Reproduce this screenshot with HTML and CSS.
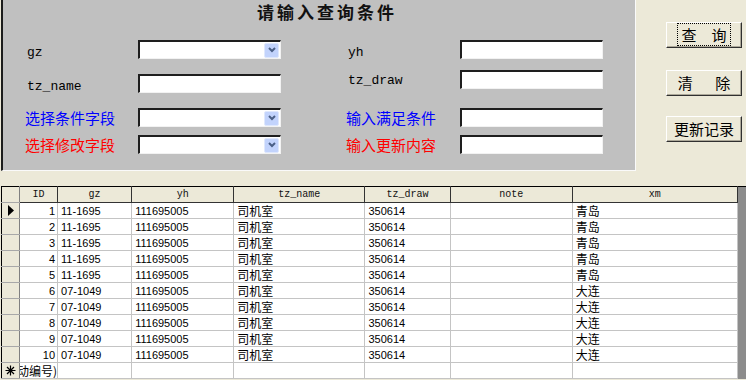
FILE: index.html
```html
<!DOCTYPE html>
<html lang="zh-CN">
<head>
    <meta charset="UTF-8">
    <title>查询</title>
    <link rel="stylesheet" href="styles.css">
</head>
<body>
    <div class="top">
        <div class="panel">
            <h2 class="title">请输入查询条件</h2>
            <div class="form">
                <span class="lbl-mono lbl-gz">gz</span>
                <div class="field combo"><span class="arrow"><svg width="8" height="6" viewBox="0 0 8 6"><path d="M1 1 L4 4 L7 1" fill="none" stroke="#4a5f86" stroke-width="2"/></svg></span></div>
                <span class="lbl-mono lbl-yh">yh</span>
                <input class="field" type="text">

                <span class="lbl-mono lbl-name">tz_name</span>
                <input class="field field-name" type="text">
                <span class="lbl-mono lbl-draw">tz_draw</span>
                <input class="field" type="text">

                <span class="lbl-cn blue">选择条件字段</span>
                <div class="field combo"><span class="arrow"><svg width="8" height="6" viewBox="0 0 8 6"><path d="M1 1 L4 4 L7 1" fill="none" stroke="#4a5f86" stroke-width="2"/></svg></span></div>
                <span class="lbl-cn blue">输入满足条件</span>
                <input class="field" type="text">

                <span class="lbl-cn red">选择修改字段</span>
                <div class="field combo"><span class="arrow"><svg width="8" height="6" viewBox="0 0 8 6"><path d="M1 1 L4 4 L7 1" fill="none" stroke="#4a5f86" stroke-width="2"/></svg></span></div>
                <span class="lbl-cn red">输入更新内容</span>
                <input class="field" type="text">
            </div>
        </div>
        <div class="actions">
            <button class="btn"><span class="focus">查&ensp;&ensp;询</span></button>
            <button class="btn">清&ensp;&ensp;&ensp;除</button>
            <button class="btn btn-update">更新记录</button>
        </div>
    </div>

    <div class="grid">
        <table class="data">
            <colgroup>
                <col style="width:18px">
                <col style="width:38px">
                <col style="width:74px">
                <col style="width:102px">
                <col style="width:131px">
                <col style="width:85px">
                <col style="width:122px">
                <col style="width:165px">
            </colgroup>
            <thead>
                <tr>
                    <th class="sel"></th>
                    <th>ID</th>
                    <th>gz</th>
                    <th>yh</th>
                    <th>tz_name</th>
                    <th>tz_draw</th>
                    <th>note</th>
                    <th>xm</th>
                </tr>
            </thead>
            <tbody>
                <tr>
                    <td class="sel"><svg width="8" height="11" viewBox="0 0 8 11"><polygon points="1,0 7,5.5 1,11" fill="#000"/></svg></td>
                    <td class="num">1</td><td>11-1695</td><td>111695005</td><td class="cn">司机室</td><td>350614</td><td></td><td class="cn">青岛</td>
                </tr>
                <tr><td class="sel"></td><td class="num">2</td><td>11-1695</td><td>111695005</td><td class="cn">司机室</td><td>350614</td><td></td><td class="cn">青岛</td></tr>
                <tr><td class="sel"></td><td class="num">3</td><td>11-1695</td><td>111695005</td><td class="cn">司机室</td><td>350614</td><td></td><td class="cn">青岛</td></tr>
                <tr><td class="sel"></td><td class="num">4</td><td>11-1695</td><td>111695005</td><td class="cn">司机室</td><td>350614</td><td></td><td class="cn">青岛</td></tr>
                <tr><td class="sel"></td><td class="num">5</td><td>11-1695</td><td>111695005</td><td class="cn">司机室</td><td>350614</td><td></td><td class="cn">青岛</td></tr>
                <tr><td class="sel"></td><td class="num">6</td><td>07-1049</td><td>111695005</td><td class="cn">司机室</td><td>350614</td><td></td><td class="cn">大连</td></tr>
                <tr><td class="sel"></td><td class="num">7</td><td>07-1049</td><td>111695005</td><td class="cn">司机室</td><td>350614</td><td></td><td class="cn">大连</td></tr>
                <tr><td class="sel"></td><td class="num">8</td><td>07-1049</td><td>111695005</td><td class="cn">司机室</td><td>350614</td><td></td><td class="cn">大连</td></tr>
                <tr><td class="sel"></td><td class="num">9</td><td>07-1049</td><td>111695005</td><td class="cn">司机室</td><td>350614</td><td></td><td class="cn">大连</td></tr>
                <tr><td class="sel"></td><td class="num">10</td><td>07-1049</td><td>111695005</td><td class="cn">司机室</td><td>350614</td><td></td><td class="cn">大连</td></tr>
                <tr>
                    <td class="sel"><svg width="11" height="11" viewBox="0 0 11 11"><path d="M5.5 0.5 V10.5 M0.5 5.5 H10.5 M2 2 L9 9 M9 2 L2 9" stroke="#000" stroke-width="1.2"/></svg></td>
                    <td class="auto"><span class="auto-in">(自动编号)</span></td><td></td><td></td><td></td><td></td><td></td><td></td>
                </tr>
            </tbody>
        </table>
        <div class="vscroll"></div>
    </div>
</body>
</html>
```

FILE: styles.css
```css
body {
    margin: 0;
    width: 746px;
    height: 380px;
    overflow: hidden;
    background-color: #ece9d8;
    font-family: "Noto Sans CJK SC", sans-serif;
}
.top {
    display: flex;
    height: 186px;
}
.panel {
    margin-left: 1px;
    width: 632px;
    height: 170px;
    background-color: #c0c0c0;
    border-left: 2px solid #1c1c1c;
    border-right: 1px solid #fafafa;
    border-bottom: 1px solid #fafafa;
}
.title {
    margin: 0;
    height: 24px;
    padding-left: 16px;
    text-align: center;
    font-size: 17px;
    line-height: 24px;
    letter-spacing: 3px;
    font-weight: bold;
    color: #111;
}
.form {
    display: grid;
    grid-template-columns: 113px 208px 114px 143px;
    grid-template-rows: 30px 38px 27px 19px;
    align-items: start;
    margin-top: 16px;
    padding-left: 22px;
}
.lbl-mono {
    font-family: "Liberation Mono", monospace;
    font-size: 13px;
    line-height: 19px;
    padding-left: 2px;
    color: #000;
}
.lbl-gz, .lbl-yh {
    margin-top: 3px;
}
.lbl-name {
    margin-top: 7px;
}
.lbl-draw {
    margin-top: 1px;
}
.lbl-cn {
    font-size: 15px;
    line-height: 19px;
}
.blue {
    color: #0000ff;
}
.red {
    color: #ff0000;
}
.field {
    box-sizing: border-box;
    width: 143px;
    height: 19px;
    margin: 0;
    padding: 0;
    background: #fff;
    border-style: solid;
    border-width: 2px 1px 1px 2px;
    border-color: #1e1e1e #f2f2f2 #f2f2f2 #1e1e1e;
    outline: none;
}
.field-name {
    margin-top: 4px;
}
.combo {
    display: flex;
    justify-content: flex-end;
    align-items: center;
}
.arrow {
    box-sizing: border-box;
    width: 15px;
    height: 15px;
    margin-right: 1px;
    display: flex;
    align-items: center;
    justify-content: center;
    background: #c2d3fc;
    border: 1px solid #dfe8fd;
    border-radius: 2px;
}
.actions {
    display: flex;
    flex-direction: column;
    margin-left: 30px;
    padding-top: 22px;
}
.btn {
    box-sizing: border-box;
    width: 76px;
    height: 26px;
    margin: 0 0 22px 0;
    padding: 0;
    background-color: #ece9d8;
    border: 1px solid;
    border-color: #fff #303030 #303030 #fff;
    box-shadow: inset -1px -1px 0 #aca899;
    font-family: "Noto Sans CJK SC", sans-serif;
    font-size: 15px;
    line-height: 20px;
    color: #000;
}
.btn-update {
    margin-top: -2px;
}
.focus {
    border: 1px dotted #000;
    padding: 0 3px;
}
.grid {
    display: flex;
}
.data {
    margin-left: 1px;
    width: 737px;
    border-collapse: collapse;
    table-layout: fixed;
    border: 1px solid #000;
}
.data tr {
    height: 16px;
}
.data th {
    padding: 0;
    height: 15px;
    background-color: #ece9d8;
    font-family: "Liberation Mono", monospace;
    font-size: 10px;
    font-weight: normal;
    color: #111;
    border-right: 1px solid #333;
    border-bottom: 1px solid #333;
}
.data td {
    padding: 0 3px;
    height: 15px;
    background: #fff;
    font-family: "Liberation Sans", "Noto Sans CJK SC", sans-serif;
    font-size: 11px;
    line-height: 14px;
    color: #000;
    white-space: nowrap;
    overflow: hidden;
    border-right: 1px solid #c4c4c4;
    border-bottom: 1px solid #c4c4c4;
}
.data td.cn {
    font-family: "Noto Sans CJK SC", sans-serif;
    font-size: 12px;
}
.data td.num {
    text-align: right;
    padding-right: 2px;
}
.data .sel {
    padding: 0;
    background-color: #ece9d8;
    text-align: center;
    vertical-align: middle;
    border-right: 1px solid #808080;
    border-bottom: 1px solid #a8a8a8;
}
.data td.sel svg {
    display: block;
    margin: 0 auto;
}
.data td.auto {
    padding: 0;
}
.auto-in {
    display: flex;
    justify-content: flex-end;
    padding-right: 0;
    font-family: "Noto Sans CJK SC", sans-serif;
    font-size: 12px;
}
.vscroll {
    flex: 1;
    background-color: #8c8c8c;
    border-top: 1px solid #000;
}
```
